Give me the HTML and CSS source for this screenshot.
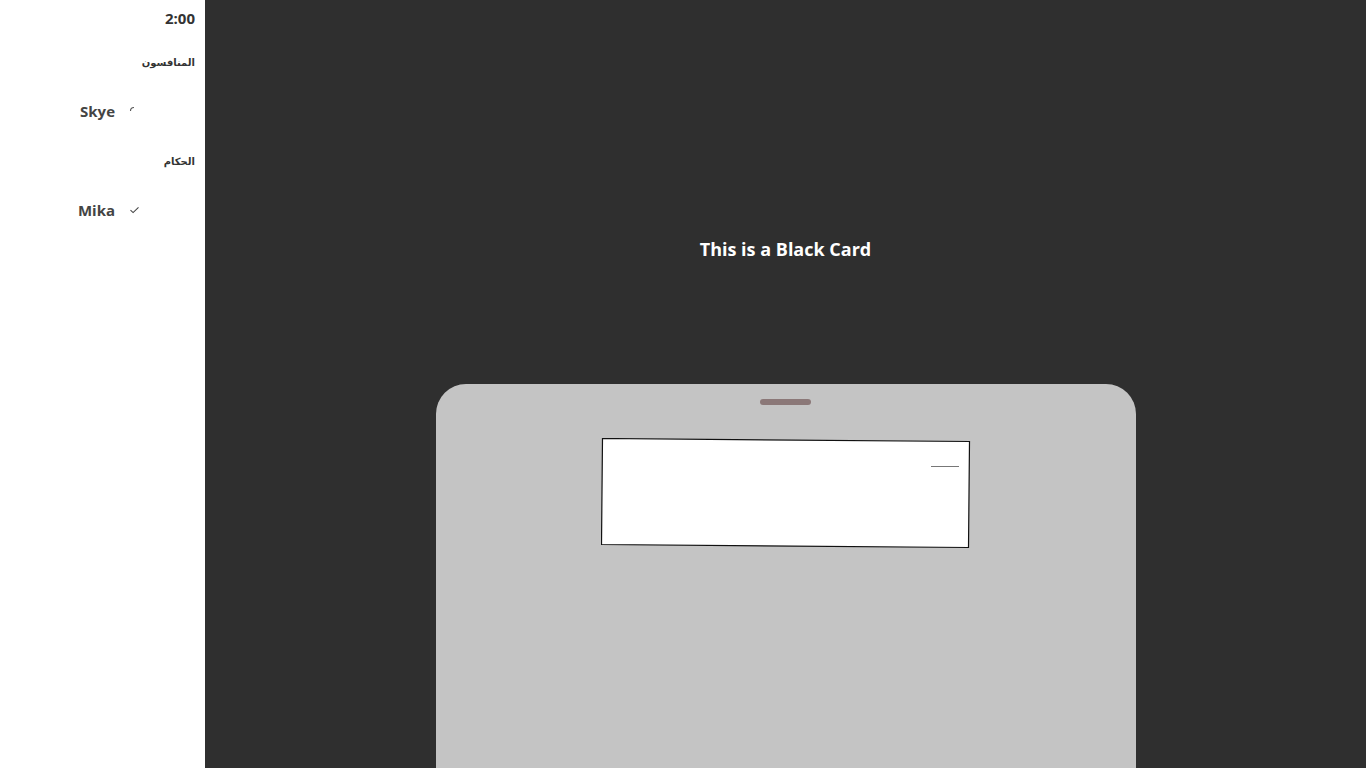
FILE: index.html
```html
<!DOCTYPE html>
<html lang="ar">
<head>
<meta charset="utf-8">
<link rel="stylesheet" href="styles.css">
</head>
<body>
<div class="app">
  <aside class="sidebar">
    <div class="timer">2:00</div>
    <div class="section-title">المنافسون</div>
    <div class="player">
      <span class="name">Skye</span>
      <span class="icon"><svg width="12" height="12" viewBox="0 0 12 12"><path d="M1.5 6 A3.5 3.5 0 0 1 5 2.5" fill="none" stroke="#555" stroke-width="1.1"/></svg></span>
    </div>
    <div class="section-title">الحكام</div>
    <div class="player">
      <span class="name">Mika</span>
      <span class="icon"><svg width="12" height="12" viewBox="0 0 12 12"><path d="M1.5 6.2 L4.1 8.6 L9.5 3.4" fill="none" stroke="#444" stroke-width="1.1"/></svg></span>
    </div>
  </aside>
  <main class="stage">
    <h1 class="title">This is a Black Card</h1>
    <section class="hand">
      <div class="handle"></div>
      <div class="card">
        <svg width="372" height="114" viewBox="0 0 372 114">
          <polygon points="1.5,0.5 368.5,3.5 367.5,109.5 0.5,106.5" fill="#fff" stroke="#111" stroke-width="1.2"/>
          <line x1="330" y1="28.5" x2="358" y2="28.5" stroke="#777" stroke-width="1"/>
        </svg>
      </div>
    </section>
  </main>
</div>
</body>
</html>
```
FILE: styles.css
```css
* { box-sizing: border-box; }
html, body { margin: 0; padding: 0; height: 100%; overflow: hidden; }
body { font-family: "Open Sans", "Noto Sans", sans-serif; }
.app { display: flex; height: 768px; }
.sidebar {
  width: 205px;
  background: #fff;
  padding: 8px 10px 0 0;
  display: flex;
  flex-direction: column;
  align-items: flex-end;
}
.timer { font-size: 15px; font-weight: 700; color: #333; line-height: 20px; }
.section-title {
  font-family: "Noto Sans", "DejaVu Sans", sans-serif;
  font-size: 10px; font-weight: 700; color: #333;
  margin-top: 26px; line-height: 16px;
}
.player {
  display: flex; align-items: center; gap: 14px;
  margin-top: 31px; padding-right: 54px; line-height: 20px;
  margin-bottom: 6px;
}
.player .name { font-size: 15px; font-weight: 700; color: #444; }
.player .icon { display: flex; width: 12px; height: 12px; }
.stage {
  flex: 1;
  background: #2f2f2f;
  display: flex;
  flex-direction: column;
  align-items: center;
}
.title {
  margin: 236px 0 0; font-size: 18px; font-weight: 700; color: #fff; line-height: 26px;
}
.hand {
  margin-top: 122px;
  width: 700px;
  flex: 1;
  background: #c4c4c4;
  border-radius: 30px 30px 0 0;
  display: flex; flex-direction: column; align-items: center;
}
.handle { width: 51px; height: 6px; border-radius: 3px; background: #8b7878; margin-top: 15px; }
.card { margin-top: 33px; margin-left: 3px; display: flex; }
.card svg { display: block; }
```
